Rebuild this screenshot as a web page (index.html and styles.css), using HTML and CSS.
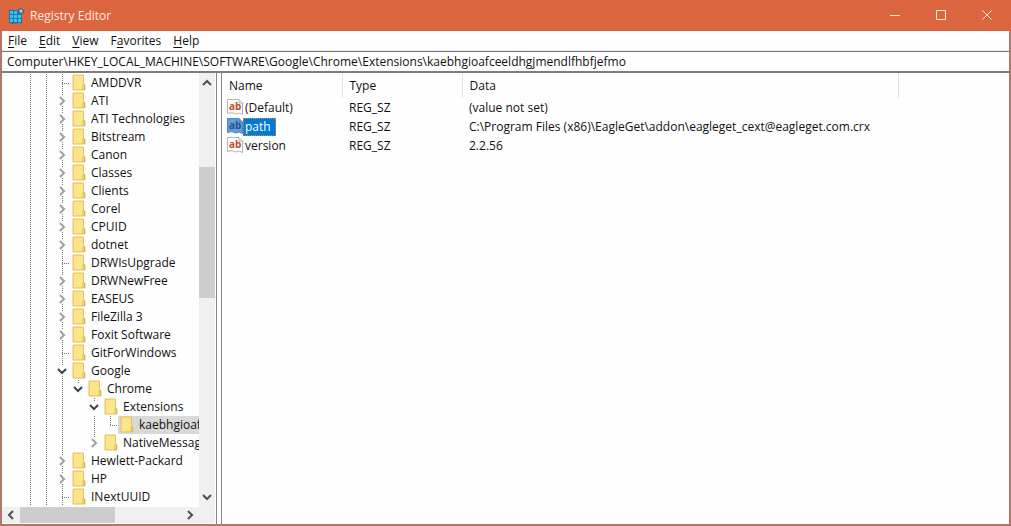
FILE: index.html
```html
<!DOCTYPE html>
<html lang="en">
<head>
    <meta charset="UTF-8">
    <meta name="viewport" content="width=device-width, initial-scale=1.0">
    <title>Registry Editor</title>
    <link rel="stylesheet" href="styles.css">
</head>
<body>
    <!-- shared icons -->
    <svg class="defs" width="0" height="0">
        <symbol id="folder" viewBox="0 0 14 17">
            <path d="M1 1H11.5V10.5L13 11.5V16H1Z" fill="#f9df82" stroke="#e3c35c"/>
            <path d="M2 2H11V15H2Z" fill="#fde48c"/>
            <path d="M11 15.5V11.5L12.5 10.5V15.5Z" fill="#fff0ae" stroke="#d9b750"/>
        </symbol>
        <symbol id="right" viewBox="0 0 10 10">
            <path d="M3 1L7 5L3 9" fill="none" stroke="currentColor" stroke-width="2"/>
        </symbol>
        <symbol id="down" viewBox="0 0 10 10">
            <path d="M1 3L5 7L9 3" fill="none" stroke="currentColor" stroke-width="2"/>
        </symbol>
        <symbol id="up" viewBox="0 0 10 10">
            <path d="M1 7L5 3L9 7" fill="none" stroke="currentColor" stroke-width="2"/>
        </symbol>
        <symbol id="left" viewBox="0 0 10 10">
            <path d="M7 1L3 5L7 9" fill="none" stroke="currentColor" stroke-width="2"/>
        </symbol>
        <symbol id="string" viewBox="0 0 16 16">
            <path class="sheet" d="M.5 .5H12L15.500 4V15.500L12 14L9 15L5 13.500L.5 14.500Z"/>
            <path class="fold" d="M12 .5V4H15.500"/>
            <text x="2" y="11">ab</text>
        </symbol>
    </svg>

    <div class="window">
        <header class="titlebar">
            <svg class="app-icon" viewBox="0 0 16 16">
                <path d="M1 2H12V5H14V15L3 16L1 14Z" fill="#1878a6"/>
                <path d="M2 3h3v3H2zM6 3h3v3H6zM2 7h3v3H2zM6 7h3v3H6zM10 7h3v3h-3zM2 11h3v3H2zM6 11h3v3H6zM10 11h3v3h-3z" fill="#3fc0f5"/>
                <path d="M10 1L13 0L16 2V5L13 6L10 4Z" fill="#4a6f7c"/>
                <circle cx="13" cy="3" r="1.500" fill="#b5d5de"/>
            </svg>
            <h1>Registry Editor</h1>
            <div class="controls">
                <button aria-label="Minimize"><svg viewBox="0 0 10 10"><path d="M0 5.500H10"/></svg></button>
                <button aria-label="Maximize"><svg viewBox="0 0 10 10"><path d="M.5 .5H9.500V9.500H.5Z"/></svg></button>
                <button aria-label="Close"><svg viewBox="0 0 10 10"><path d="M.5 .5L9.500 9.500M9.500 .5L.5 9.500"/></svg></button>
            </div>
        </header>

        <nav class="menu">
            <button><u>F</u>ile</button>
            <button><u>E</u>dit</button>
            <button><u>V</u>iew</button>
            <button>F<u>a</u>vorites</button>
            <button><u>H</u>elp</button>
        </nav>

        <input class="address" type="text" aria-label="Address" value="Computer\HKEY_LOCAL_MACHINE\SOFTWARE\Google\Chrome\Extensions\kaebhgioafceeldhgjmendlfhbfjefmo">

        <main class="panes">
            <section class="tree-pane">
                <ul class="tree">
                    <li><i class="line"></i><i class="line"></i><i class="line branch"></i><svg class="folder"><use href="#folder"/></svg><span>AMDDVR</span></li>
                    <li><i class="line"></i><i class="line"></i><button class="line" aria-label="Expand"><svg><use href="#right"/></svg></button><svg class="folder"><use href="#folder"/></svg><span>ATI</span></li>
                    <li><i class="line"></i><i class="line"></i><button class="line" aria-label="Expand"><svg><use href="#right"/></svg></button><svg class="folder"><use href="#folder"/></svg><span>ATI Technologies</span></li>
                    <li><i class="line"></i><i class="line"></i><button class="line" aria-label="Expand"><svg><use href="#right"/></svg></button><svg class="folder"><use href="#folder"/></svg><span>Bitstream</span></li>
                    <li><i class="line"></i><i class="line"></i><button class="line" aria-label="Expand"><svg><use href="#right"/></svg></button><svg class="folder"><use href="#folder"/></svg><span>Canon</span></li>
                    <li><i class="line"></i><i class="line"></i><button class="line" aria-label="Expand"><svg><use href="#right"/></svg></button><svg class="folder"><use href="#folder"/></svg><span>Classes</span></li>
                    <li><i class="line"></i><i class="line"></i><button class="line" aria-label="Expand"><svg><use href="#right"/></svg></button><svg class="folder"><use href="#folder"/></svg><span>Clients</span></li>
                    <li><i class="line"></i><i class="line"></i><button class="line" aria-label="Expand"><svg><use href="#right"/></svg></button><svg class="folder"><use href="#folder"/></svg><span>Corel</span></li>
                    <li><i class="line"></i><i class="line"></i><button class="line" aria-label="Expand"><svg><use href="#right"/></svg></button><svg class="folder"><use href="#folder"/></svg><span>CPUID</span></li>
                    <li><i class="line"></i><i class="line"></i><button class="line" aria-label="Expand"><svg><use href="#right"/></svg></button><svg class="folder"><use href="#folder"/></svg><span>dotnet</span></li>
                    <li><i class="line"></i><i class="line"></i><i class="line branch"></i><svg class="folder"><use href="#folder"/></svg><span>DRWIsUpgrade</span></li>
                    <li><i class="line"></i><i class="line"></i><button class="line" aria-label="Expand"><svg><use href="#right"/></svg></button><svg class="folder"><use href="#folder"/></svg><span>DRWNewFree</span></li>
                    <li><i class="line"></i><i class="line"></i><button class="line" aria-label="Expand"><svg><use href="#right"/></svg></button><svg class="folder"><use href="#folder"/></svg><span>EASEUS</span></li>
                    <li><i class="line"></i><i class="line"></i><button class="line" aria-label="Expand"><svg><use href="#right"/></svg></button><svg class="folder"><use href="#folder"/></svg><span>FileZilla 3</span></li>
                    <li><i class="line"></i><i class="line"></i><button class="line" aria-label="Expand"><svg><use href="#right"/></svg></button><svg class="folder"><use href="#folder"/></svg><span>Foxit Software</span></li>
                    <li><i class="line"></i><i class="line"></i><i class="line branch"></i><svg class="folder"><use href="#folder"/></svg><span>GitForWindows</span></li>
                    <li><i class="line"></i><i class="line"></i><button class="line open" aria-label="Collapse"><svg><use href="#down"/></svg></button><svg class="folder"><use href="#folder"/></svg><span>Google</span></li>
                    <li><i class="line"></i><i class="line"></i><i class="line"></i><button class="stub open" aria-label="Collapse"><svg><use href="#down"/></svg></button><svg class="folder"><use href="#folder"/></svg><span>Chrome</span></li>
                    <li><i class="line"></i><i class="line"></i><i class="line"></i><i></i><button class="stub open" aria-label="Collapse"><svg><use href="#down"/></svg></button><svg class="folder"><use href="#folder"/></svg><span>Extensions</span></li>
                    <li><i class="line"></i><i class="line"></i><i class="line"></i><i></i><i class="line"></i><i class="corner branch"></i><div class="current"><svg class="folder"><use href="#folder"/></svg><span>kaebhgioaf</span></div></li>
                    <li><i class="line"></i><i class="line"></i><i class="line"></i><i></i><button class="stub" aria-label="Expand"><svg><use href="#right"/></svg></button><svg class="folder"><use href="#folder"/></svg><span>NativeMessag</span></li>
                    <li><i class="line"></i><i class="line"></i><button class="line" aria-label="Expand"><svg><use href="#right"/></svg></button><svg class="folder"><use href="#folder"/></svg><span>Hewlett-Packard</span></li>
                    <li><i class="line"></i><i class="line"></i><button class="line" aria-label="Expand"><svg><use href="#right"/></svg></button><svg class="folder"><use href="#folder"/></svg><span>HP</span></li>
                    <li><i class="line"></i><i class="line"></i><i class="line branch"></i><svg class="folder"><use href="#folder"/></svg><span>INextUUID</span></li>
                </ul>
                <div class="scroll vertical">
                    <button aria-label="Scroll up"><svg><use href="#up"/></svg></button>
                    <div class="track"><div class="thumb"></div></div>
                    <button aria-label="Scroll down"><svg><use href="#down"/></svg></button>
                </div>
                <div class="scroll horizontal">
                    <button aria-label="Scroll left"><svg><use href="#left"/></svg></button>
                    <div class="track"><div class="thumb"></div></div>
                    <button aria-label="Scroll right"><svg><use href="#right"/></svg></button>
                </div>
            </section>

            <section class="list-pane">
                <table>
                    <thead>
                        <tr><th class="col">Name</th><th class="col">Type</th><th class="col-data">Data</th><th class="rest"></th></tr>
                    </thead>
                    <tbody>
                        <tr>
                            <td><div class="name"><svg><use href="#string"/></svg><span>(Default)</span></div></td>
                            <td>REG_SZ</td>
                            <td>(value not set)</td>
                        </tr>
                        <tr class="selected">
                            <td><div class="name"><svg><use href="#string"/></svg><span>path</span></div></td>
                            <td>REG_SZ</td>
                            <td>C:\Program Files (x86)\EagleGet\addon\eagleget_cext@eagleget.com.crx</td>
                        </tr>
                        <tr>
                            <td><div class="name"><svg><use href="#string"/></svg><span>version</span></div></td>
                            <td>REG_SZ</td>
                            <td>2.2.56</td>
                        </tr>
                    </tbody>
                </table>
            </section>
        </main>
    </div>
</body>
</html>
```
FILE: styles.css
```css
*{
    padding: 0;
    margin: 0;
    box-sizing: border-box;
}

body{
    font: 12px/18px "Open Sans", "Noto Sans", sans-serif;
    color: #111;
}

button, input{
    font: inherit;
    color: inherit;
    border: none;
    background: none;
}

.defs{
    position: absolute;
}

.window{
    display: flex;
    flex-direction: column;
    height: 100vh;
    background-color: #fefefe;
    border: 2px solid #b97468;
    border-top: none;
}

/* title bar */
.titlebar{
    display: flex;
    align-items: center;
    height: 31px;
    margin: 0 -2px;
    padding: 0 1px 0 8px;
    background-color: #db653f;
    color: #fdeee0;
}

.app-icon{
    width: 16px;
    height: 16px;
    margin-right: 6px;
}

.titlebar h1{
    flex: 1;
    font-size: 12px;
    font-weight: normal;
}

.controls{
    display: flex;
}

.controls button{
    width: 46px;
    height: 30px;
}

.controls svg{
    width: 10px;
    height: 10px;
    fill: none;
    stroke: #fdeee0;
}

/* menu and address */
.menu{
    display: flex;
    gap: 12px;
    height: 20px;
    padding-left: 6px;
    border-bottom: 1px solid #eee;
}

.menu u{
    text-underline-offset: 2px;
}

.address{
    height: 22px;
    padding-left: 5px;
    border-top: 1px solid #777;
    border-bottom: 2px solid #7c7f7c;
    outline: none;
}

.panes{
    display: flex;
    flex: 1;
    min-height: 0;
}

/* tree */
.tree-pane{
    display: grid;
    grid-template-columns: 1fr 16px;
    grid-template-rows: 1fr 16px;
    width: 215px;
    padding: 0 1px 1px 0;
    border-right: 1px solid #888;
}

.tree{
    min-width: 0;
    min-height: 0;
    padding: 1px 0 0 20px;
    overflow: hidden;
    list-style: none;
}

.tree li{
    display: flex;
    height: 18px;
    white-space: nowrap;
}

.tree i, .tree button{
    flex: none;
    width: 16px;
    height: 18px;
}

.tree button{
    display: flex;
    align-items: center;
    justify-content: center;
    color: #a0a0a0;
}

.tree button.open{
    color: #444;
}

.tree button svg{
    width: 10px;
    height: 10px;
    background-color: #fefefe;
}

.line, .corner, .stub{
    background: repeating-linear-gradient(#777 0 1px, transparent 1px 2px) 8px 0 / 1px 100% no-repeat;
}

.corner{
    background-size: 1px 10px;
}

.stub{
    background-size: 1px 3px;
}

.branch::after{
    content: "";
    display: block;
    height: 1px;
    margin: 9px 0 0 8px;
    background: repeating-linear-gradient(90deg, #777 0 1px, transparent 1px 2px);
}

.folder{
    flex: none;
    width: 14px;
    height: 17px;
    margin: 0 3px 0 2px;
}

.tree span{
    padding-left: 2px;
}

.current{
    display: flex;
    flex: 1;
    background-color: #d9d9d9;
}

/* scroll bars */
.scroll{
    display: flex;
    background-color: #f0f0f0;
}

.scroll button{
    display: flex;
    align-items: center;
    justify-content: center;
    width: 16px;
    height: 16px;
    color: #505050;
}

.scroll svg{
    width: 10px;
    height: 10px;
}

.track{
    flex: 1;
}

.thumb{
    background-color: #cdcdcd;
}

.vertical{
    flex-direction: column;
    padding: 2px 0;
}

.vertical .thumb{
    height: 33%;
    margin-top: 76px;
}

.horizontal{
    grid-column: 1 / 3;
    padding: 0 17px 0 1px;
}

.horizontal .thumb{
    width: 58%;
    height: 100%;
    margin-left: 1px;
}

/* values */
.list-pane{
    flex: 1;
    min-width: 0;
    margin-left: 4px;
    border-left: 1px solid #888;
}

table{
    width: 100%;
    table-layout: fixed;
    border-collapse: collapse;
}

th{
    height: 25px;
    padding-left: 7px;
    border-right: 1px solid #e2e2e2;
    font-weight: normal;
    text-align: left;
}

.col{
    width: 120px;
}

.col-data{
    width: 436px;
}

.rest{
    border: none;
}

td{
    height: 19px;
    padding-left: 7px;
    white-space: nowrap;
}

td:first-child{
    padding-left: 5px;
}

.name{
    --paper: #fff;
    --edge: #b5b5b5;
    display: flex;
}

.name svg{
    width: 16px;
    height: 16px;
    font: bold 10px "Open Sans", sans-serif;
    fill: #bf4a2c;
}

.sheet{
    fill: var(--paper);
    stroke: var(--edge);
}

.fold{
    fill: none;
    stroke: var(--edge);
}

.name span{
    padding: 0 3px 0 2px;
}

.selected .name{
    --paper: #5f9fdc;
    --edge: #4a86c4;
}

.selected .name svg{
    fill: #2d4f86;
}

.selected .name span{
    padding-right: 5px;
    background-color: #0078d7;
    color: #fff;
    outline: 1px dotted #e08a3c;
    outline-offset: -1px;
}
```
